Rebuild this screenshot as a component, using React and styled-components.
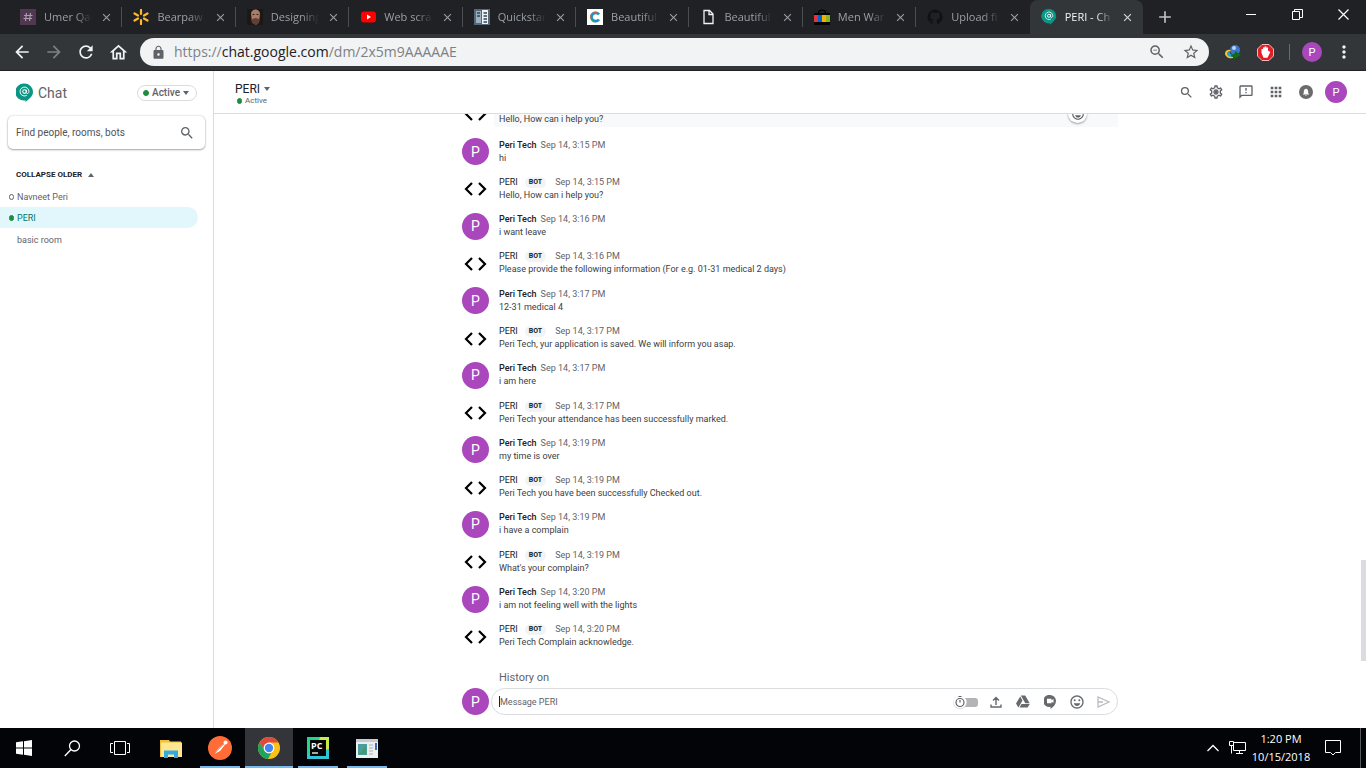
import React from "react";
import styled, { createGlobalStyle, css } from "styled-components";
import {
  MdAdd, MdApps, MdArrowBack, MdArrowForward, MdClose, MdLock, MdMoreVert,
  MdOutlineEmojiEmotions, MdOutlineFeedback, MdOutlineHome,
  MdOutlineSettings, MdRefresh, MdSearch, MdStarBorder, MdZoomOut,
} from "react-icons/md";

const GlobalStyle = createGlobalStyle`
  * { box-sizing: border-box; }
  body { margin: 0; font-family: Roboto, "Liberation Sans", sans-serif; background: #fff; }
  button { border: 0; padding: 0; background: none; color: inherit; font: inherit; cursor: pointer; }
  h1, p, ul { margin: 0; padding: 0; }
  svg { display: block; flex: none; }
`;

const systemFont = css`font-family: "Open Sans", "Noto Sans", sans-serif;`;

const Screen = styled.div`
  height: 100vh;
  display: flex;
  flex-direction: column;
  overflow: hidden;
`;

/* Browser chrome */

const TabStrip = styled.header`
  ${systemFont}
  flex: none;
  display: flex;
  height: 34px;
  padding-left: 9px;
  background: #202124;
`;

const Tabs = styled.div`
  flex: 1;
  min-width: 0;
  display: flex;
`;

const Tab = styled.div`
  position: relative;
  flex: 1;
  min-width: 0;
  display: flex;
  align-items: center;
  gap: 8px;
  padding: 0 9px 0 11px;
  border-radius: 8px 8px 0 0;
  color: ${(p) => (p.$active ? "#f1f3f4" : "#9aa0a6")};
  background: ${(p) => (p.$active ? "#323639" : "transparent")};

  &::after {
    content: "";
    position: absolute;
    right: 0;
    top: 7px;
    height: 20px;
    border-right: 1px solid ${(p) => (p.$divider ? "#4a4d51" : "transparent")};
  }
`;

const TabTitle = styled.span`
  flex: 1;
  overflow: hidden;
  white-space: nowrap;
  font-size: 11px;
  line-height: 16px;
  mask-image: linear-gradient(to right, #000 65%, transparent);
`;

const TabClose = styled.button`
  display: flex;
  color: ${(p) => (p.$active ? "#dadce0" : "#9aa0a6")};
`;

const NewTab = styled.button`
  display: flex;
  align-items: center;
  padding: 0 12px;
  color: #bdc1c6;
`;

const WindowControls = styled.div`
  display: flex;
  padding-left: 41px;
`;

const WindowButton = styled.button`
  width: 46px;
  height: 28px;
  display: flex;
  align-items: center;
  justify-content: center;
`;

const Toolbar = styled.nav`
  flex: none;
  display: flex;
  align-items: center;
  height: 37px;
  padding: 0 6px;
  background: #323639;
  border-bottom: 1px solid #202124;
  color: #f1f3f4;
`;

const NavButton = styled.button`
  width: 32px;
  height: 28px;
  display: flex;
  align-items: center;
  justify-content: center;
  color: ${(p) => (p.$dim ? "#7d8184" : "#f1f3f4")};
`;

const Omnibox = styled.div`
  flex: 1;
  min-width: 0;
  height: 28px;
  display: flex;
  align-items: center;
  gap: 8px;
  margin-left: 6px;
  padding: 0 5px 0 11px;
  border-radius: 14px;
  background: #f1f3f4;
  color: #5f6368;
`;

const Url = styled.a`
  ${systemFont}
  flex: 1;
  font-size: 14px;
  line-height: 20px;
  color: #7d8186;
  text-decoration: none;
  b { font-weight: 400; color: #202124; }
`;

const BoxButton = styled.button`
  width: 26px;
  display: flex;
  justify-content: center;
`;

const Extensions = styled.div`
  display: flex;
  align-items: center;
  padding-left: 8px;
`;

const ExtensionDivider = styled.span`
  height: 16px;
  margin: 0 6px 0 8px;
  border-left: 1px solid #696c6f;
`;

/* Chat application */

const ChatApp = styled.div`
  flex: 1;
  min-height: 0;
  display: flex;
  color: #202124;
`;

const Sidebar = styled.aside`
  flex: none;
  width: 214px;
  border-right: 1px solid #dadce0;
`;

const Brand = styled.div`
  display: flex;
  align-items: center;
  height: 43px;
  padding: 0 16px;
`;

const BrandName = styled.h1`
  flex: 1;
  padding-left: 5px;
  font-size: 14px;
  line-height: 16px;
  font-weight: 400;
  color: #5f6368;
`;

const StatusPill = styled.button`
  display: flex;
  align-items: center;
  gap: 3px;
  height: 16px;
  padding: 0 7px 0 5px;
  border: 1px solid #dadce0;
  border-radius: 8px;
  font-size: 10px;
  font-weight: 500;
  color: #5f6368;
`;

const Dot = styled.i`
  flex: none;
  width: ${(p) => (p.$narrow ? 5 : 6)}px;
  height: 6px;
  border-radius: 3px;
  background: ${(p) => (p.$hollow ? "#fff" : "#1e8e3e")};
  border: 1px solid ${(p) => (p.$hollow ? "#5f6368" : "#1e8e3e")};
  visibility: ${(p) => (p.$none ? "hidden" : "visible")};
`;

const SearchBox = styled.label`
  display: flex;
  align-items: center;
  height: 33px;
  margin: 2px 8px 0;
  padding: 0 10px 0 8px;
  border-radius: 5px;
  background: #fff;
  box-shadow: 0 1px 2px rgba(60, 64, 67, 0.4), 0 0 2px rgba(60, 64, 67, 0.3);
  color: #5f6368;
`;

const SearchInput = styled.input`
  flex: 1;
  min-width: 0;
  padding: 0;
  border: 0;
  outline: 0;
  font: 400 10px/12px Roboto, sans-serif;
  &::placeholder { color: #4f5357; opacity: 1; }
`;

const CollapseButton = styled.button`
  display: flex;
  align-items: center;
  gap: 6px;
  margin: 20px 0 6px 16px;
  font-size: 8px;
  line-height: 11px;
  font-weight: 700;
`;

const RoomList = styled.ul`
  list-style: none;
  & + & { padding-top: 1px; }
`;

const RoomLink = styled.a`
  display: flex;
  align-items: center;
  gap: 3px;
  height: 21px;
  margin-right: 15px;
  padding-left: 9px;
  border-radius: 0 11px 11px 0;
  font-size: 9px;
  line-height: 12px;
  text-decoration: none;
  color: ${(p) => (p.$selected ? "#00796b" : "#5f6368")};
  background: ${(p) => (p.$selected ? "#e2f7fb" : "transparent")};
`;

const Main = styled.main`
  position: relative;
  flex: 1;
  min-width: 0;
  display: flex;
  flex-direction: column;
`;

const ChatHeader = styled.header`
  flex: none;
  display: flex;
  align-items: center;
  justify-content: space-between;
  height: 43px;
  padding: 0 15px 0 21px;
  border-bottom: 1px solid #dadce0;
`;

const ChatHeading = styled.div`
  padding-top: 3px;
`;

const ChatTitle = styled.button`
  display: flex;
  align-items: center;
  gap: 4px;
  font-size: 12px;
  line-height: 14px;
`;

const ChatStatus = styled.p`
  display: flex;
  align-items: center;
  gap: 3px;
  padding-left: 2px;
  font-size: 8px;
  line-height: 10px;
  color: #5f6368;
`;

const Actions = styled.div`
  display: flex;
  align-items: center;
  color: #5f6368;
`;

const ActionButton = styled.button`
  width: 30px;
  height: 30px;
  display: flex;
  align-items: center;
  justify-content: center;
`;

const Column = styled.div`
  width: 100%;
  max-width: 656px;
  margin: 0 auto;
`;

const Thread = styled(Column)`
  flex: 1;
  min-height: 0;
  display: flex;
  flex-direction: column;
`;

const CutMessage = styled.div`
  flex: none;
  display: flex;
  align-items: flex-end;
  height: 13px;
  margin-bottom: 6px;
  overflow: hidden;
`;

const CutBody = styled.div`
  flex: 1;
  height: 13px;
  display: flex;
  align-items: flex-end;
  justify-content: space-between;
  margin-left: 5px;
  padding: 0 31px 1px 5px;
  background: #f8f9fa;
`;

const Reaction = styled.button`
  width: 19px;
  height: 19px;
  display: flex;
  align-items: center;
  justify-content: center;
  margin-bottom: 3px;
  border-radius: 50%;
  background: #fff;
  box-shadow: 0 1px 2px rgba(60, 64, 67, 0.5);
  color: #5f6368;
`;

const Messages = styled.ul`
  flex: 1;
  min-height: 0;
  display: grid;
  grid-auto-rows: 1fr;
  list-style: none;
`;

const Message = styled.li`
  display: flex;
  align-items: center;
  gap: 10px;
`;

const Avatar = styled.span`
  flex: none;
  width: ${(p) => p.$size}px;
  height: ${(p) => p.$size}px;
  display: flex;
  align-items: center;
  justify-content: center;
  border-radius: 50%;
  background: #ab47bc;
  color: #fff;
  font-size: ${(p) => (p.$size > 24 ? 14 : 11)}px;
`;

const MessageMeta = styled.p`
  display: flex;
  align-items: center;
  font-size: 9px;
  line-height: 13px;
  color: #5f6368;
`;

const Sender = styled.strong`
  margin-right: ${(p) => (p.$bot ? 7 : 4)}px;
  font-weight: ${(p) => (p.$bot ? 400 : 500)};
  color: #202124;
`;

const BotBadge = styled.span`
  height: 11px;
  margin-right: 9px;
  padding: 0 4px;
  border-radius: 6px;
  background: #f1f3f4;
  color: #202124;
  font-size: 7px;
  line-height: 11px;
  font-weight: 700;
`;

const MessageText = styled.p`
  font-size: 9px;
  line-height: 13px;
  color: #3c4043;
`;

const Composer = styled(Column)`
  flex: none;
  padding: 16px 0 13px;
`;

const HistoryLabel = styled.p`
  padding: 0 0 3px 37px;
  font-size: 11px;
  line-height: 14px;
  color: #5f6368;
`;

const ComposerRow = styled.div`
  display: flex;
  align-items: center;
  gap: 2px;
`;

const ComposerBox = styled.div`
  flex: 1;
  display: flex;
  align-items: center;
  height: 27px;
  padding-left: 7px;
  border: 1px solid #dadce0;
  border-radius: 14px;
  color: #5f6368;
`;

const Caret = styled.i`
  height: 11px;
  border-left: 1px solid #202124;
`;

const MessageInput = styled.input`
  flex: 1;
  min-width: 0;
  padding: 0;
  border: 0;
  outline: 0;
  background: none;
  font: 400 9px/12px Roboto, sans-serif;
  &::placeholder { color: #5f6368; opacity: 1; }
`;

const ComposerButton = styled.button`
  width: 27px;
  height: 25px;
  display: flex;
  align-items: center;
  justify-content: center;
  color: ${(p) => (p.$dim ? "#b8bbbf" : "#666a6e")};
`;

const HistoryToggle = styled.button`
  display: flex;
  align-items: center;
  margin-right: 2px;
`;

const ScrollThumb = styled.div`
  position: absolute;
  right: 0;
  bottom: 67px;
  width: 5px;
  height: 101px;
  background: #dadce0;
`;

/* Desktop taskbar */

const Taskbar = styled.footer`
  ${systemFont}
  flex: none;
  display: flex;
  justify-content: space-between;
  height: 40px;
  background: #020408;
  color: #fff;
`;

const TaskGroup = styled.div`
  display: flex;
  align-items: center;
  gap: ${(p) => p.$gap || 0}px;
`;

const TaskButton = styled.button`
  width: 48px;
  height: 40px;
  display: flex;
  align-items: center;
  justify-content: center;
  border-bottom: 2px solid transparent;
  border-top: 2px solid transparent;
  background:
    ${(p) => p.$open
      ? `linear-gradient(#76b9ed, #76b9ed) bottom / ${p.$current ? 48 : 40}px 2px no-repeat border-box,`
      : ""}
    linear-gradient(${(p) => (p.$current ? "#34353a, #34353a" : "transparent, transparent")}) border-box;
`;

const TrayButton = styled.button`
  display: flex;
  justify-content: center;
  width: 24px;
`;

const Clock = styled.time`
  width: 64px;
  text-align: center;
  font-size: 11px;
  line-height: 18px;
`;

const NoticeButton = styled.button`
  width: 48px;
  height: 40px;
  display: flex;
  align-items: center;
  justify-content: center;
  border-right: 1px solid #55575a;
  padding-right: 7px;
  margin: 0 5px 0 0;
`;

/* Drawings */

const ChatLogo = ({ width, height }) => (
  <svg width={width} height={height} viewBox="0 0 18 20">
    <path d="M9 0a9 9 0 0 1 9 9c0 4-3.4 7-8 10.600V17.800A9 9 0 1 1 9 0Z" fill="#0b9584" />
    <circle cx="9" cy="8.500" r="1.900" fill="none" stroke="#fff" strokeWidth="1.100" />
    <path d="M11 6.500v3c0 1.600 2.700 1.400 2.700-1a4.700 4.700 0 1 0-2.300 4" fill="none" stroke="#fff" strokeWidth="1" />
  </svg>
);

const Triangle = ({ up, width = 6 }) => (
  <svg width={width} height="4" viewBox="0 0 6 3" preserveAspectRatio="none">
    <path d={up ? "M0 3h6L3 0z" : "M0 0h6L3 3z"} fill="#5f6368" />
  </svg>
);

const CodeIcon = () => (
  <svg width="27" height="27" viewBox="0 0 27 27">
    <path d="m10 8-6 6 6 6M17 8l6 6-6 6" fill="none" stroke="#000" strokeWidth="2.200" />
  </svg>
);

const favicons = {
  slack: <><rect width="16" height="16" fill="#4f3850" /><path d="M6.500 4 5.500 12M10.500 4l-1 8M4 6.500h8.500M3.500 9.500H12" stroke="#aa9dab" strokeWidth="1.200" /></>,
  spark: <path d="M8 1v4M8 11v4M1.500 4.500 5 6.500M14.500 4.500 11 6.500M1.500 11.500 5 9.500M14.500 11.500 11 9.500" stroke="#fdb92b" strokeWidth="2.200" strokeLinecap="round" />,
  portrait: <><rect width="16" height="16" fill="#1d1716" /><path d="M4 5c0-6 9-6 9 0l-1 8-3 3-4-3z" fill="#a97b69" /><path d="M4 10c2 1 2-1 4.500-1S12 11 13 9l-1 5-3 2-4-2z" fill="#5d4239" /><path d="M5.500 5.500h2M9.500 5.500h2" stroke="#37211d" /></>,
  youtube: <><rect x="1" y="2.500" width="15" height="11" rx="3" fill="#f00" /><path d="M7 5.500v5L11 8z" fill="#fff" /></>,
  docs: <><rect width="16" height="16" fill="#546a79" /><path d="M2 2h5v12H2z" fill="#9db0bd" /><path d="M8 1h6v14H8z" fill="#eef2f4" /><path d="M3 4h3M3 7h3M9.500 4H13M9.500 7H13M9.500 10H13M9.500 13H13" stroke="#34434e" strokeWidth="1.400" /></>,
  cee: <><rect width="16" height="16" fill="#fff" /><path d="M12 5.500A4.200 4.200 0 1 0 12 10.500" fill="none" stroke="#1b91c9" strokeWidth="2.800" /><path d="M10 3.400C6 2.500 3.500 5.500 3.600 8" fill="none" stroke="#e2632d" strokeWidth="1" /><path d="M3.600 8c0 3 2 5 5 5" fill="none" stroke="#56a84b" strokeWidth="1" /></>,
  page: <path d="M4 1.500h5.500L13 5v9.500H4zM9 1.500V5.500h4" fill="none" stroke="#f1f3f4" strokeWidth="1.300" />,
  bag: <><path d="M4.500 4c0-4 7-4 7 0" fill="none" stroke="#000" strokeWidth="1.200" /><path d="M0 4h16v12H0z" fill="#050505" /><path d="M0 6h4v7H0z" fill="#e53238" /><path d="M4 6h4v7H4z" fill="#0064d2" /><path d="M8 6h4v7H8z" fill="#f5af02" /><path d="M12 6h4v7h-4z" fill="#86b817" /></>,
  github: <path d="M8 .5a7.500 7.500 0 0 0-2.400 14.600c.4.100.5-.2.500-.4V13c-2 .4-2.500-1-2.500-1-.4-.8-.8-1.100-.8-1.100-.7-.5 0-.5 0-.5.800.1 1.200.8 1.200.8.700 1.200 1.800.9 2.200.7.100-.5.300-.9.500-1.100-1.700-.2-3.400-.8-3.400-3.700 0-.8.300-1.500.8-2-.1-.2-.3-1 .1-2 0 0 .6-.2 2 .8a7 7 0 0 1 3.800 0c1.400-1 2-.8 2-.8.400 1 .2 1.800.1 2 .5.500.8 1.200.8 2 0 2.900-1.800 3.500-3.400 3.700.3.200.5.700.5 1.400v2.500c0 .2.100.5.500.4A7.500 7.500 0 0 0 8 .5Z" fill="#111214" />,
};

const Favicon = ({ name }) =>
  name === "chat" ? <ChatLogo width={16} height={16} /> : (
    <svg width="16" height="16" viewBox="0 0 16 16">{favicons[name]}</svg>
  );

const tabs = [
  ["slack", "Umer Qai"], ["spark", "Bearpaw"], ["portrait", "Designing"],
  ["youtube", "Web scra"], ["docs", "Quickstar"], ["cee", "Beautiful"],
  ["page", "Beautiful"], ["bag", "Men War"], ["github", "Upload fi"], ["chat", "PERI - Ch"],
];

const help = "Hello, How can i help you?";
const messages = [
  ["hi", "3:15"], [help, "3:15", true],
  ["i want leave", "3:16"],
  ["Please provide the following information (For e.g. 01-31 medical 2 days)", "3:16", true],
  ["12-31 medical 4", "3:17"],
  ["Peri Tech, yur application is saved. We will inform you asap.", "3:17", true],
  ["i am here", "3:17"],
  ["Peri Tech your attendance has been successfully marked.", "3:17", true],
  ["my time is over", "3:19"],
  ["Peri Tech you have been successfully Checked out.", "3:19", true],
  ["i have a complain", "3:19"],
  ["What's your complain?", "3:19", true],
  ["i am not feeling well with the lights", "3:20"],
  ["Peri Tech Complain acknowledge.", "3:20", true],
];

const BrowserChrome = () => (
  <>
    <TabStrip>
      <Tabs>
        {tabs.map(([icon, title], i) => {
          const active = i === tabs.length - 1;
          return (
            <Tab key={i} $active={active} $divider={i < tabs.length - 2}>
              <Favicon name={icon} />
              <TabTitle>{title}</TabTitle>
              <TabClose $active={active} aria-label="Close tab"><MdClose size={13} /></TabClose>
            </Tab>
          );
        })}
      </Tabs>
      <NewTab aria-label="New tab"><MdAdd size={20} /></NewTab>
      <WindowControls>
        <WindowButton aria-label="Minimize">
          <svg width="10" height="10"><path d="M0 5.500h10" stroke="#fff" /></svg>
        </WindowButton>
        <WindowButton aria-label="Restore">
          <svg width="11" height="11"><path d="M.5 2.500h7v8h-7zM2.500 2.500v-2h8v8h-3" fill="none" stroke="#fff" /></svg>
        </WindowButton>
        <WindowButton aria-label="Close">
          <svg width="11" height="11"><path d="m.5.5 10 10M10.500.5l-10 10" stroke="#fff" strokeWidth="1.200" /></svg>
        </WindowButton>
      </WindowControls>
    </TabStrip>
    <Toolbar>
      <NavButton aria-label="Back"><MdArrowBack size={20} /></NavButton>
      <NavButton $dim aria-label="Forward"><MdArrowForward size={20} /></NavButton>
      <NavButton aria-label="Reload"><MdRefresh size={20} /></NavButton>
      <NavButton aria-label="Home"><MdOutlineHome size={21} /></NavButton>
      <Omnibox>
        <MdLock size={15} />
        <Url href="https://chat.google.com/dm/2x5m9AAAAAE">https://<b>chat.google.com</b>/dm/2x5m9AAAAAE</Url>
        <BoxButton aria-label="Zoom"><MdZoomOut size={18} /></BoxButton>
        <BoxButton aria-label="Bookmark"><MdStarBorder size={18} /></BoxButton>
      </Omnibox>
      <Extensions>
        <NavButton aria-label="Download manager">
          <svg width="16" height="16" viewBox="0 0 16 16">
            <circle cx="10" cy="6" r="5" fill="#3f74ce" />
            <circle cx="9" cy="4" r="2" fill="#b9d3f4" />
            <path d="M0 9c1-4 5-4 6-2-2 0-3 2-1 3l3 1v3c-4 1-8-1-8-5Z" fill="#f3c62b" />
            <path d="M2 9c1-2 2-2 3-1-1 1 0 2 3 3v2c-4 0-6-1-6-4Z" fill="#2a9bd7" />
            <path d="M6 10c2 1 4 0 4-3l6 4-7 4-1-2c-2 0-2-1-2-3Z" fill="#0f6d17" />
          </svg>
        </NavButton>
        <NavButton aria-label="Ad blocker">
          <svg width="17" height="17" viewBox="0 0 17 17">
            <path d="M5 .5h7L16.500 5v7L12 16.500H5L.5 12V5z" fill="#e41e26" stroke="#f4b7b7" />
            <path d="M4.500 9V5h1.500V3.500h1.600v-1h1.600v1H11v3l1.500 1 .8.500-2.800 5.700H6.500z" fill="#fff" />
          </svg>
        </NavButton>
        <ExtensionDivider />
        <NavButton aria-label="Profile"><Avatar $size={20}>P</Avatar></NavButton>
        <NavButton aria-label="Menu"><MdMoreVert size={20} /></NavButton>
      </Extensions>
    </Toolbar>
  </>
);

const ChatSidebar = () => (
  <Sidebar>
    <Brand>
      <ChatLogo width={17} height={20} />
      <BrandName>Chat</BrandName>
      <StatusPill><Dot />Active <Triangle /></StatusPill>
    </Brand>
    <SearchBox>
      <SearchInput aria-label="Find people, rooms, bots" placeholder="Find people, rooms, bots" />
      <MdSearch size={16} />
    </SearchBox>
    <CollapseButton>COLLAPSE OLDER <Triangle up /></CollapseButton>
    <RoomList>
      <li><RoomLink href="#navneet"><Dot $narrow $hollow />Navneet Peri</RoomLink></li>
      <li><RoomLink href="#peri" $selected><Dot $narrow />PERI</RoomLink></li>
    </RoomList>
    <RoomList>
      <li><RoomLink href="#basic"><Dot $narrow $none />basic room</RoomLink></li>
    </RoomList>
  </Sidebar>
);

const Conversation = () => (
  <Main>
    <ChatHeader>
      <ChatHeading>
        <ChatTitle>PERI <Triangle /></ChatTitle>
        <ChatStatus><Dot $narrow />Active</ChatStatus>
      </ChatHeading>
      <Actions>
        <ActionButton aria-label="Search"><MdSearch size={15} /></ActionButton>
        <ActionButton aria-label="Settings">
          <svg width="16" height="16" viewBox="0 0 24 24"><MdOutlineSettings size={24} /><circle cx="12" cy="12" r="2" fill="currentColor" /></svg>
        </ActionButton>
        <ActionButton aria-label="Feedback"><MdOutlineFeedback size={16} /></ActionButton>
        <ActionButton aria-label="Apps"><MdApps size={16} /></ActionButton>
        <ActionButton aria-label="Notifications">
          <svg width="14" height="14" viewBox="0 0 14 14">
            <circle cx="7" cy="7" r="7" fill="#6b6b6b" />
            <path d="M4 9.500V9l.8-.8V6.500C4.800 5 5.600 4.200 6.500 4c0-.7 1-.7 1 0 .9.200 1.700 1 1.700 2.500v1.700L10 9v.5zM6.200 10h1.600c0 1-1.600 1-1.600 0Z" fill="#fff" />
          </svg>
        </ActionButton>
        <ActionButton aria-label="Account"><Avatar $size={22}>P</Avatar></ActionButton>
      </Actions>
    </ChatHeader>
    <Thread>
      <CutMessage>
        <CodeIcon />
        <CutBody>
          <MessageText>{help}</MessageText>
          <Reaction aria-label="Add reaction"><MdOutlineEmojiEmotions size={14} /></Reaction>
        </CutBody>
      </CutMessage>
      <Messages>
        {messages.map(([text, time, bot], i) => (
          <Message key={i}>
            {bot ? <CodeIcon /> : <Avatar $size={27}>P</Avatar>}
            <div>
              <MessageMeta>
                <Sender $bot={bot}>{bot ? "PERI" : "Peri Tech"}</Sender>
                {bot && <BotBadge>BOT</BotBadge>}
                <span>Sep 14, {time} PM</span>
              </MessageMeta>
              <MessageText>{text}</MessageText>
            </div>
          </Message>
        ))}
      </Messages>
    </Thread>
    <Composer>
      <HistoryLabel>History on</HistoryLabel>
      <ComposerRow>
        <Avatar $size={27}>P</Avatar>
        <ComposerBox>
          <Caret />
          <MessageInput aria-label="Message PERI" placeholder="Message PERI" />
          <HistoryToggle aria-label="Toggle history">
            <svg width="28" height="16" viewBox="0 0 28 16">
              <rect x="8" y="4" width="18" height="9" rx="3" fill="#b4b4b4" />
              <circle cx="8" cy="8.500" r="6.800" fill="#dcdcdc" />
              <circle cx="8" cy="8" r="6.300" fill="#fff" />
              <circle cx="8" cy="8.500" r="4" fill="none" stroke="#5f6368" strokeWidth="1.200" />
              <path d="M6.500 2.500h3M8 6v2.500" stroke="#5f6368" strokeWidth="1.200" />
            </svg>
          </HistoryToggle>
          <ComposerButton aria-label="Upload file">
            <svg width="12" height="12" viewBox="0 0 12 12"><path d="M6 9V2M3 4.500 6 1.500l3 3M1 8.500V11h10V8.500" fill="none" stroke="currentColor" strokeWidth="1.400" /></svg>
          </ComposerButton>
          <ComposerButton aria-label="Insert from Drive">
            <svg width="14" height="13" viewBox="0 0 14 13"><path d="M4.800.5h4.400l4.500 7.700H9.300zM4.200 1.500l2.300 3.900-4.100 7.100L0 8.600zM5.500 9.100h8.300l-2.200 3.400H3.500z" fill="currentColor" /></svg>
          </ComposerButton>
          <ComposerButton aria-label="Add video meeting">
            <svg width="12" height="14" viewBox="0 0 12 14"><path d="M6 0a6 6 0 0 1 6 6c0 3.300-2.500 6-5.500 8v-2.200A6 6 0 1 1 6 0Z" fill="currentColor" /><path d="M3 3.800h4.500v1.500L9.500 4v4l-2-1.300v1.500H3z" fill="#fff" /></svg>
          </ComposerButton>
          <ComposerButton aria-label="Insert emoji"><MdOutlineEmojiEmotions size={16} /></ComposerButton>
          <ComposerButton $dim aria-label="Send">
            <svg width="13" height="12" viewBox="0 0 13 12"><path d="M1 1v10l11-5zM1 6h5" fill="none" stroke="currentColor" strokeWidth="1.300" /></svg>
          </ComposerButton>
        </ComposerBox>
      </ComposerRow>
    </Composer>
    <ScrollThumb />
  </Main>
);

const DesktopTaskbar = () => (
  <Taskbar>
    <TaskGroup $gap={3}>
      <TaskGroup>
        <TaskButton aria-label="Start">
          <svg width="16" height="16" viewBox="0 0 16 16"><path d="M0 2.300 7 1.300V7.500H0zM8 1.200 16 0v7.500H8zM0 8.500h7v6.200l-7-1zM8 8.500h8V16l-8-1.200z" fill="#fff" /></svg>
        </TaskButton>
        <TaskButton aria-label="Search">
          <svg width="17" height="17" viewBox="0 0 17 17"><circle cx="10.500" cy="6" r="5" fill="none" stroke="#fff" strokeWidth="1.300" /><path d="M7 9.500.8 16" stroke="#fff" strokeWidth="1.400" /></svg>
        </TaskButton>
        <TaskButton aria-label="Task view">
          <svg width="20" height="14"><path d="M4.500.5h11v13h-11zM3 2.500H.5v9H3M17 2.500h2.500v9H17" fill="none" stroke="#fff" /></svg>
        </TaskButton>
      </TaskGroup>
      <TaskGroup $gap={1}>
        <TaskButton aria-label="File Explorer">
          <svg width="22" height="19" viewBox="0 0 22 19"><path d="M0 1h9l1 1.500h11V18H0z" fill="#f2c13c" /><path d="M1 3.500h21V18H1z" fill="#ffe693" /><path d="M4 11.500h14V19h-4v-3.500H8V19H4z" fill="#32a9e0" /></svg>
        </TaskButton>
        <TaskButton $open aria-label="Postman">
          <svg width="24" height="24" viewBox="0 0 24 24"><circle cx="12" cy="12" r="12" fill="#ff6c37" /><path d="m6 18 4-5 6-5.500 1 1.200-5 6.300z" fill="#fff" /><circle cx="17.500" cy="6.500" r="2" fill="#fff" /><path d="m6 18 10-10" stroke="#ff6c37" strokeWidth=".7" /></svg>
        </TaskButton>
        <TaskButton $open $current aria-label="Chrome">
          <svg width="22" height="22" viewBox="0 0 22 22">
            <circle cx="11" cy="11" r="11" fill="#fbc116" />
            <path d="M11 11 6.700 13.500 1.500 5.500A11 11 0 0 1 20.500 5.500H11z" fill="#dd4b3e" />
            <path d="M1.500 5.500 6.700 13.500a5 5 0 0 0 7 1.700L10 22A11 11 0 0 1 1.500 5.500Z" fill="#1da462" />
            <circle cx="11" cy="11" r="5.400" fill="#fff" /><circle cx="11" cy="11" r="4.200" fill="#4285f4" />
          </svg>
        </TaskButton>
        <TaskButton $open aria-label="PyCharm">
          <svg width="22" height="22" viewBox="0 0 22 22">
            <rect width="22" height="22" fill="#22d88f" /><path d="M13 0h9v14L13 22H7z" fill="#c8ec49" /><path d="M0 18 22 12v10H0z" fill="#2fc4d8" /><path d="M0 0h10v3L0 14z" fill="#21d789" />
            <rect x="3" y="3" width="16" height="16" fill="#050505" />
            <text x="4" y="12" fontSize="9" fontWeight="700" fill="#fff" fontFamily="Open Sans, sans-serif">PC</text>
            <path d="M5 16h6" stroke="#fff" strokeWidth="1.300" />
          </svg>
        </TaskButton>
        <TaskButton $open aria-label="Desktop application">
          <svg width="22" height="19" viewBox="0 0 22 19"><rect width="22" height="19" fill="#edf0f1" /><path d="M0 0h22v3H0z" fill="#c4ccd0" /><rect x="2" y="5" width="9" height="11" fill="#4b9da0" /><path d="M3 15 10 7v8z" fill="#479b61" /><path d="M13 6h4M13 9h4M13 12h4M13 15h4" stroke="#a8b0b5" /><path d="M19 4h2v7h-2z" fill="#3476b8" /></svg>
        </TaskButton>
      </TaskGroup>
    </TaskGroup>
    <TaskGroup>
      <TrayButton aria-label="Show hidden icons">
        <svg width="12" height="8"><path d="m.5 7 5.500-5.500L11.500 7" fill="none" stroke="#fff" strokeWidth="1.300" /></svg>
      </TrayButton>
      <TrayButton aria-label="Network">
        <svg width="17" height="14"><path d="M4.500 1.500h12v8h-12zM10.500 9.500v3M7 12.500h7M.5.500h4v4h-4zM2.500 4.500v8" fill="none" stroke="#fff" /></svg>
      </TrayButton>
      <Clock>1:20 PM<br />10/15/2018</Clock>
      <NoticeButton aria-label="Notifications">
        <svg width="17" height="16"><path d="M.5.500h15v12h-5l-2.500 2.500-2.500-2.500h-5z" fill="none" stroke="#fff" /></svg>
      </NoticeButton>
    </TaskGroup>
  </Taskbar>
);

export default function App() {
  return (
    <Screen>
      <GlobalStyle />
      <BrowserChrome />
      <ChatApp>
        <ChatSidebar />
        <Conversation />
      </ChatApp>
      <DesktopTaskbar />
    </Screen>
  );
}
